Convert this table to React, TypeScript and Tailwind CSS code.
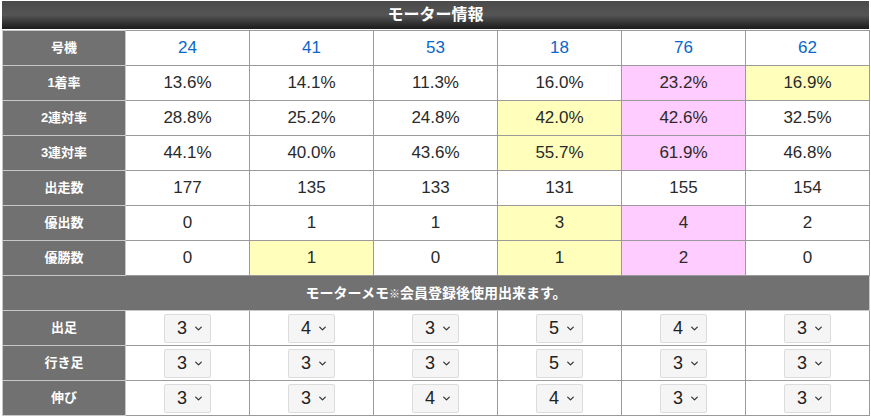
import React from "react";

type Mark = "" | "y" | "p";

interface StatRow {
  label: string;
  values: string[];
  marks: Mark[];
}

const motors = ["24", "41", "53", "18", "76", "62"];

const stats: StatRow[] = [
  {
    label: "1着率",
    values: ["13.6%", "14.1%", "11.3%", "16.0%", "23.2%", "16.9%"],
    marks: ["", "", "", "", "p", "y"],
  },
  {
    label: "2連対率",
    values: ["28.8%", "25.2%", "24.8%", "42.0%", "42.6%", "32.5%"],
    marks: ["", "", "", "y", "p", ""],
  },
  {
    label: "3連対率",
    values: ["44.1%", "40.0%", "43.6%", "55.7%", "61.9%", "46.8%"],
    marks: ["", "", "", "y", "p", ""],
  },
  {
    label: "出走数",
    values: ["177", "135", "133", "131", "155", "154"],
    marks: ["", "", "", "", "", ""],
  },
  {
    label: "優出数",
    values: ["0", "1", "1", "3", "4", "2"],
    marks: ["", "", "", "y", "p", ""],
  },
  {
    label: "優勝数",
    values: ["0", "1", "0", "1", "2", "0"],
    marks: ["", "y", "", "y", "p", ""],
  },
];

const memos = [
  { label: "出足", values: [3, 4, 3, 5, 4, 3] },
  { label: "行き足", values: [3, 3, 3, 5, 3, 3] },
  { label: "伸び", values: [3, 3, 4, 4, 3, 3] },
];

const markBg: Record<Mark, string> = {
  "": "bg-white",
  y: "bg-[#ffffbb]",
  p: "bg-[#ffccff]",
};

function Label({ children }: { children: React.ReactNode }) {
  return (
    <th className="h-[35px] w-[123px] border border-[#c8c8c8] bg-[#717171] p-0 text-center text-[13px] font-bold text-white">
      {children}
    </th>
  );
}

function MemoSelect({ value }: { value: number }) {
  return (
    <div className="relative mx-auto h-[29px] w-[47px]">
      <select
        defaultValue={value}
        className="h-full w-full appearance-none rounded-[2px] border border-[#dcdcdc] bg-[#f5f5f5] pl-[12px] text-[18px] leading-none text-[#222] outline-none"
      >
        {[1, 2, 3, 4, 5].map((n) => (
          <option key={n} value={n}>
            {n}
          </option>
        ))}
      </select>
      <svg
        viewBox="0 0 10 6"
        className="pointer-events-none absolute right-[9px] top-[12px] h-[5px] w-[7px]"
      >
        <path
          d="M1 1 L5 5 L9 1"
          fill="none"
          stroke="#333"
          strokeWidth="1.8"
          strokeLinecap="round"
          strokeLinejoin="round"
        />
      </svg>
    </div>
  );
}

export default function App() {
  return (
    <div
      className="w-[871px] bg-white px-[2px] pt-[1px]"
      style={{ fontFamily: '"Liberation Sans", "Noto Sans CJK JP", sans-serif' }}
    >
      <div className="flex h-[28px] w-[867px] items-center justify-center bg-gradient-to-b from-[#4a4a4a] via-[#555] to-[#1c1c1c] text-[16px] font-bold text-white">
        モーター情報
      </div>
      <table className="mt-[1px] w-[867px] table-fixed border-collapse">
        <colgroup>
          <col className="w-[123px]" />
          {motors.map((m) => (
            <col key={m} className="w-[124px]" />
          ))}
        </colgroup>
        <tbody>
          <tr>
            <Label>号機</Label>
            {motors.map((m) => (
              <td
                key={m}
                className="h-[35px] border border-[#9a9a9a] bg-white p-0 text-center text-[17px] text-[#0a66c8]"
              >
                {m}
              </td>
            ))}
          </tr>
          {stats.map((row) => (
            <tr key={row.label}>
              <Label>{row.label}</Label>
              {row.values.map((v, i) => (
                <td
                  key={i}
                  className={`h-[35px] border border-[#9a9a9a] p-0 text-center text-[17px] text-[#2a2a2a] ${markBg[row.marks[i]]}`}
                >
                  {v}
                </td>
              ))}
            </tr>
          ))}
          <tr>
            <td
              colSpan={7}
              className="h-[35px] border border-[#c8c8c8] bg-[#717171] p-0 text-center text-[14px] font-bold text-white"
            >
              モーターメモ<span className="text-[11px]">※</span>会員登録後使用出来ます。
            </td>
          </tr>
          {memos.map((row) => (
            <tr key={row.label}>
              <Label>{row.label}</Label>
              {row.values.map((v, i) => (
                <td
                  key={i}
                  className="h-[35px] border border-[#9a9a9a] bg-white p-0 text-center"
                >
                  <MemoSelect value={v} />
                </td>
              ))}
            </tr>
          ))}
        </tbody>
      </table>
    </div>
  );
}
